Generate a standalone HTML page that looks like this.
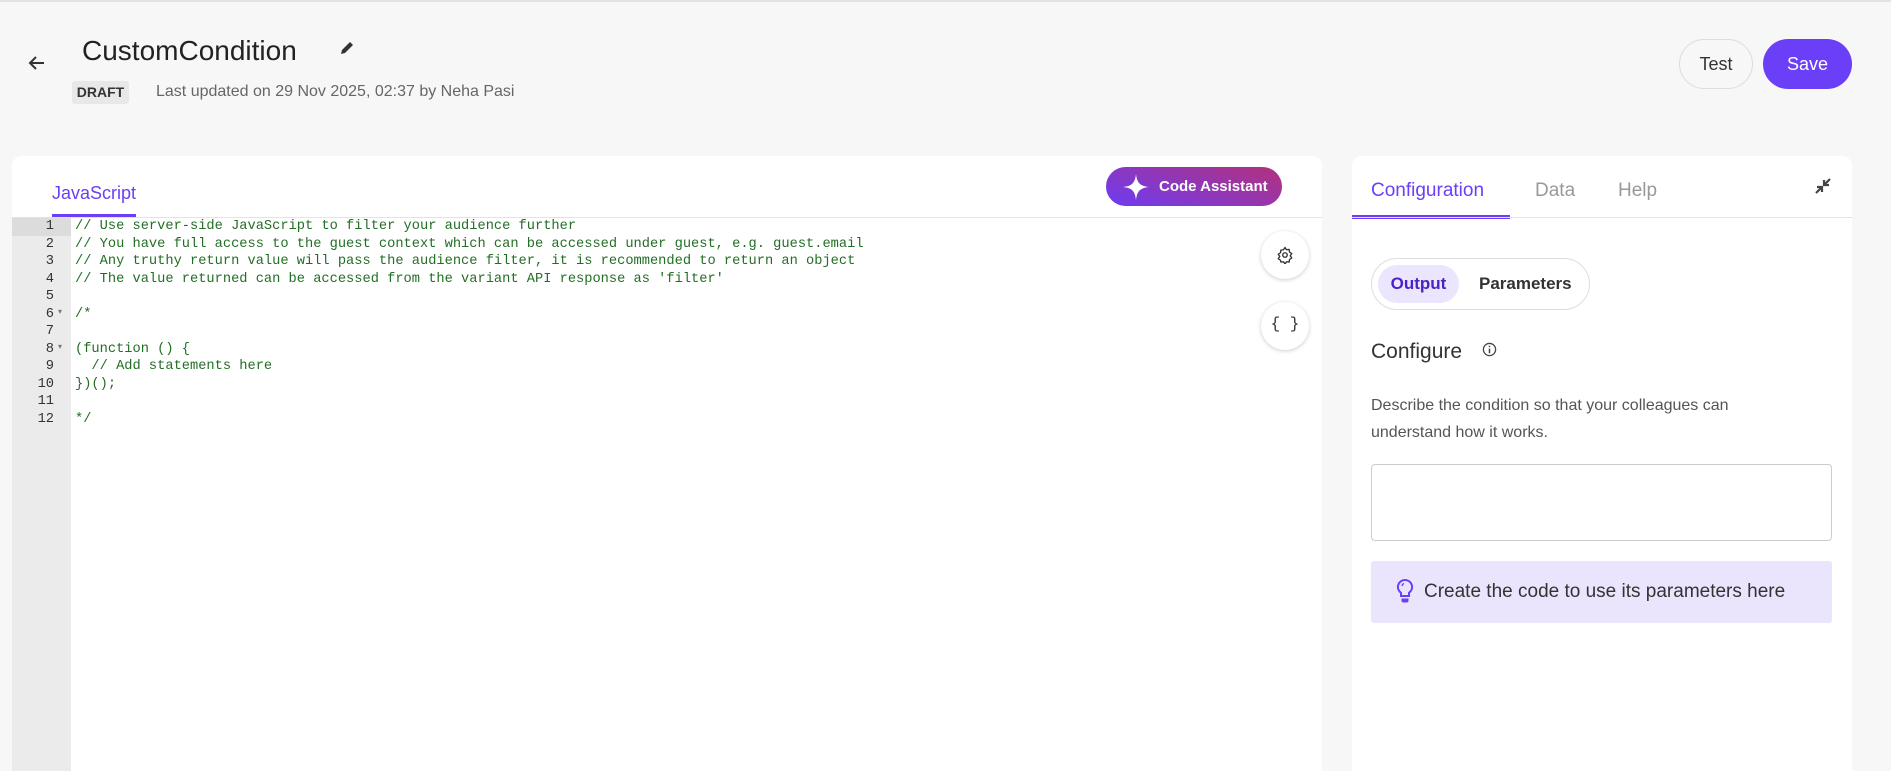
<!DOCTYPE html>
<html><head><meta charset="utf-8"><style>
*{box-sizing:border-box;margin:0;padding:0}
html,body{width:1891px;height:771px;overflow:hidden}
body{background:#f7f7f7;font-family:"Liberation Sans",sans-serif;color:#222;position:relative}
.abs{position:absolute}
.code div{height:17.5px;line-height:17.5px;white-space:pre}
</style></head><body>
<div class="abs" style="left:0;top:0;width:1891px;height:2px;background:#e3e3e3"></div>
<svg class="abs" style="left:28px;top:55px" width="18" height="16" viewBox="0 0 18 16"><path d="M16 8H3M8 2L2 8l6 6" fill="none" stroke="#333" stroke-width="2"/></svg>
<div class="abs" style="left:82px;top:35px;font-size:28px;color:#222">CustomCondition</div>
<svg class="abs" style="left:339px;top:40px" width="16" height="16" viewBox="0 0 16 16"><path d="M2 14l1-4 8-8 3 3-8 8z" fill="#333"/></svg>
<div class="abs" style="left:72px;top:81px;width:57px;height:23px;background:#e8e8e8;border-radius:3px;font-size:14px;font-weight:bold;line-height:23px;text-align:center;color:#333">DRAFT</div>
<div class="abs" style="left:156px;top:83px;font-size:16px;color:#666">Last updated on 29 Nov 2025, 02:37 by Neha Pasi</div>
<div class="abs" style="left:1679px;top:39px;width:74px;height:50px;border:1px solid #ddd;border-radius:25px;font-size:18px;line-height:48px;text-align:center;color:#333">Test</div>
<div class="abs" style="left:1763px;top:39px;width:89px;height:50px;background:#6b3ff7;border-radius:25px;font-size:18px;line-height:50px;text-align:center;color:#fff">Save</div>

<div class="abs" style="left:12px;top:156px;width:1310px;height:615px;background:#fff;border-radius:10px 10px 0 0;overflow:hidden">
 <div class="abs" style="left:40px;top:27px;font-size:18px;color:#6b3ff7">JavaScript</div>
 <div class="abs" style="left:40px;top:58px;width:84px;height:4px;background:#6b3ff7"></div>
 <div class="abs" style="left:0;top:61px;width:1310px;height:1px;background:#e3e3e3"></div>
 <div class="abs" style="left:1094px;top:11px;width:176px;height:39px;border-radius:20px;background:linear-gradient(20deg,#6d3cf2,#b3317c);color:#fff;font-weight:bold;font-size:15px;line-height:39px;padding-left:53px">Code Assistant</div>
 <svg class="abs" style="left:1110px;top:17px" width="28" height="28" viewBox="0 0 28 28"><path d="M14 1C15 10 18 13 27 14C18 15 15 18 14 27C13 18 10 15 1 14C10 13 13 10 14 1Z" fill="#fff"/></svg>
 <div class="abs" style="left:0;top:62px;width:59px;height:600px;background:#ebebeb"></div>
 <div class="abs" style="left:0;top:62px;width:59px;height:17.5px;background:#dcdcdc"></div>
 <div class="abs code" style="left:0;top:62px;width:42px;text-align:right;font-family:'Liberation Mono',monospace;font-size:13.7px;color:#333">
  <div>1</div><div>2</div><div>3</div><div>4</div><div>5</div><div>6</div><div>7</div><div>8</div><div>9</div><div>10</div><div>11</div><div>12</div>
 </div>
 <div class="abs" style="left:46px;top:150px;font-size:8px;line-height:12px;color:#777">▾</div>
 <div class="abs" style="left:46px;top:185px;font-size:8px;line-height:12px;color:#777">▾</div>
 <div class="abs code" style="left:63px;top:62px;font-family:'Liberation Mono',monospace;font-size:13.7px;color:#236e25">
<div>// Use server-side JavaScript to filter your audience further</div><div>// You have full access to the guest context which can be accessed under guest, e.g. guest.email</div><div>// Any truthy return value will pass the audience filter, it is recommended to return an object</div><div>// The value returned can be accessed from the variant API response as 'filter'</div><div> </div><div>/*</div><div> </div><div>(function () {</div><div>  // Add statements here</div><div>})();</div><div> </div><div>*/</div>
 </div>
 <div class="abs" style="left:1249px;top:75px;width:48px;height:48px;border-radius:50%;background:#fff;box-shadow:0 1px 4px rgba(0,0,0,.2)"></div>
 <svg class="abs" style="left:1264px;top:90px" width="18" height="18" viewBox="0 0 24 24"><path d="M12 2l2 3 3.5-.5.5 3.5 3 2-2 3 2 3-3 2-.5 3.5-3.5-.5-2 3-2-3-3.5.5L6 19l-3-2 2-3-2-3 3-2 .5-3.5L10 5z" fill="none" stroke="#333" stroke-width="1.8" stroke-linejoin="round"/><circle cx="12" cy="12" r="3" fill="none" stroke="#333" stroke-width="1.8"/></svg>
 <div class="abs" style="left:1249px;top:146px;width:48px;height:48px;border-radius:50%;background:#fff;box-shadow:0 1px 4px rgba(0,0,0,.2)"></div>
 <div class="abs" style="left:1249px;top:159px;width:48px;text-align:center;font-family:'Liberation Mono',monospace;font-size:16px;color:#333">{ }</div>
</div>

<div class="abs" style="left:1352px;top:156px;width:500px;height:615px;background:#fff;border-radius:10px 10px 0 0">
 <div class="abs" style="left:19px;top:24px;font-size:19px;color:#6b3ff7">Configuration</div>
 <div class="abs" style="left:183px;top:24px;font-size:19px;color:#999">Data</div>
 <div class="abs" style="left:266px;top:24px;font-size:19px;color:#999">Help</div>
 <svg class="abs" style="left:462px;top:21px" width="18" height="18" viewBox="0 0 18 18"><path d="M2 16l5-5M3 10h5v5M16 2l-5 5M10 3v5h5" fill="none" stroke="#444" stroke-width="2.2"/></svg>
 <div class="abs" style="left:0;top:59px;width:158px;height:4px;background:#6b3ff7"></div>
 <div class="abs" style="left:0;top:61px;width:500px;height:1px;background:#e3e3e3"></div>
 <div class="abs" style="left:19px;top:102px;width:219px;height:52px;border:1px solid #ddd;border-radius:26px"></div>
 <div class="abs" style="left:26px;top:109px;width:81px;height:38px;border-radius:19px;background:#ebe5fd;color:#4b22c8;font-weight:bold;font-size:17px;line-height:38px;text-align:center">Output</div>
 <div class="abs" style="left:127px;top:109px;font-weight:bold;font-size:17px;line-height:38px;color:#333">Parameters</div>
 <div class="abs" style="left:19px;top:184px;font-size:21px;color:#333">Configure</div>
 <svg class="abs" style="left:130px;top:186px" width="15" height="15" viewBox="0 0 16 16"><circle cx="8" cy="8" r="6.5" fill="none" stroke="#444" stroke-width="1.4"/><path d="M8 7v5M8 4v1.5" stroke="#444" stroke-width="1.6"/></svg>
 <div class="abs" style="left:19px;top:236px;width:400px;font-size:16px;line-height:27px;color:#555">Describe the condition so that your colleagues can understand how it works.</div>
 <div class="abs" style="left:19px;top:308px;width:461px;height:77px;border:1px solid #ccc;border-radius:4px"></div>
 <div class="abs" style="left:19px;top:405px;width:461px;height:62px;background:#eae5fd;border-radius:3px"></div>
 <svg class="abs" style="left:43px;top:422px" width="20" height="26" viewBox="0 0 20 26"><path d="M10 2a7 7 0 0 0-4 12.8V18h8v-3.2A7 7 0 0 0 10 2z" fill="none" stroke="#6b3ff7" stroke-width="2"/><path d="M6.5 20.5h7v2a2 2 0 0 1-2 2h-3a2 2 0 0 1-2-2z" fill="#6b3ff7"/><path d="M9 5.5a3 3 0 0 0-2 2.5" fill="none" stroke="#6b3ff7" stroke-width="1.3"/></svg>
 <div class="abs" style="left:72px;top:425px;font-size:19px;color:#333">Create the code to use its parameters here</div>
</div>
</body></html>
